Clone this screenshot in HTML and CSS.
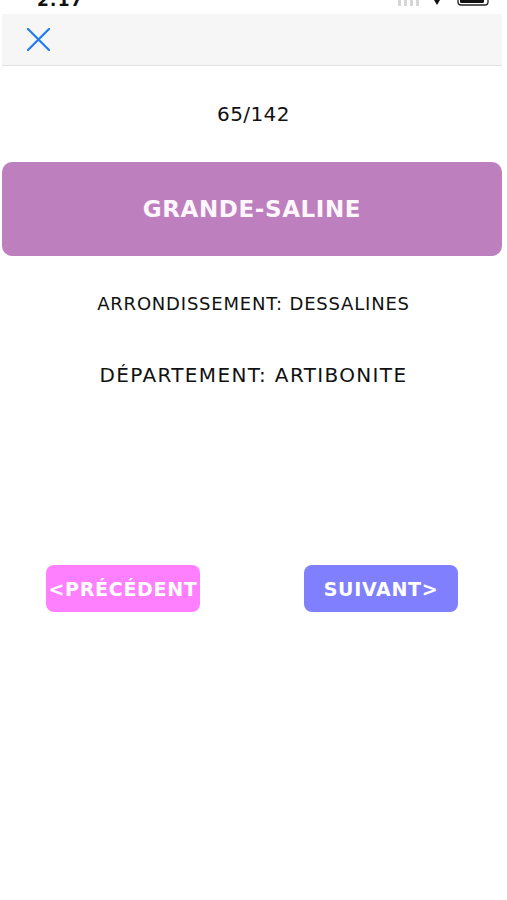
FILE: index.html
```html
<!DOCTYPE html>
<html lang="fr">
<head>
    <meta charset="UTF-8">
    <meta name="viewport" content="width=device-width, initial-scale=1.0">
    <title>Communes</title>
    <link rel="stylesheet" href="styles.css">
</head>
<body>
    <div class="status">
        <span class="time">2:17</span>
        <svg class="sys" width="94" height="14" viewBox="0 0 94 14">
            <rect x="2" y="0" width="3" height="6" fill="#d6d6d6"/>
            <rect x="8" y="0" width="3" height="6" fill="#d6d6d6"/>
            <rect x="14" y="0" width="3" height="6" fill="#d6d6d6"/>
            <rect x="20" y="0" width="3" height="6" fill="#d6d6d6"/>
            <path d="M38 0 L44 0 L41 5 Z" fill="#111"/>
            <rect x="62" y="-6" width="30" height="11" rx="3" fill="none" stroke="#222" stroke-width="1.3"/>
            <rect x="64" y="-4" width="24" height="7" rx="1.5" fill="#111"/>
        </svg>
    </div>
    <div class="navbar">
        <a class="close" type="button">
            <svg width="23" height="23" viewBox="0 0 23 23">
                <path d="M1 1 L22 22 M22 1 L1 22" stroke="#1f7cf0" stroke-width="2.2" stroke-linecap="round"/>
            </svg>
        </a>
    </div>
    <p class="counter">65/142</p>
    <div class="card">GRANDE-SALINE</div>
    <p class="info arr">ARRONDISSEMENT: DESSALINES</p>
    <p class="info dep">DÉPARTEMENT: ARTIBONITE</p>
    <div class="nav-buttons">
        <a class="btn prev" type="button">&lt;PRÉCÉDENT</a>
        <a class="btn next" type="button">SUIVANT&gt;</a>
    </div>
</body>
</html>
```
FILE: styles.css
```css
body {
    font-family: "DejaVu Sans", "Liberation Sans", sans-serif;
    margin: 0;
    background-color: #ffffff;
    color: #111111;
}
.status {
    height: 14px;
    overflow: hidden;
    display: flex;
    justify-content: space-between;
    padding: 0 17px 0 37px;
}
.time {
    font-weight: bold;
    font-size: 17px;
    line-height: 17px;
    margin-top: -8px;
    letter-spacing: 1px;
}
.sys {
    display: block;
}
.navbar {
    height: 51px;
    margin: 0 5px 0 2px;
    background-color: #f7f6f7;
    border-bottom: 1px solid #e2e2e2;
    display: flex;
    align-items: center;
    padding-left: 25px;
}
.close svg {
    display: block;
}
.counter {
    margin: 36px 0 0 0;
    text-align: center;
    font-size: 20px;
    line-height: 24px;
    letter-spacing: 0.4px;
}
.card {
    margin: 36px 5px 0 2px;
    height: 94px;
    border-radius: 10px;
    background-color: #bd7fbd;
    color: #fdf7fd;
    font-weight: bold;
    font-size: 23px;
    letter-spacing: 0.6px;
    display: flex;
    align-items: center;
    justify-content: center;
}
.info {
    text-align: center;
    margin: 0;
    line-height: 24px;
}
.arr {
    margin-top: 36px;
    font-size: 18px;
    letter-spacing: 0.8px;
}
.dep {
    margin-top: 47px;
    font-size: 20px;
    letter-spacing: 1.35px;
}
.nav-buttons {
    display: flex;
    justify-content: space-between;
    padding: 0 49px 0 46px;
    margin-top: 178px;
}
.btn {
    width: 154px;
    height: 47px;
    border-radius: 8px;
    color: #ffffff;
    font-weight: bold;
    font-size: 19px;
    letter-spacing: 0.7px;
    display: flex;
    align-items: center;
    justify-content: center;
    white-space: nowrap;
    user-select: none;
}
.prev {
    background-color: #ff80ff;
}
.next {
    background-color: #8080ff;
}
```
